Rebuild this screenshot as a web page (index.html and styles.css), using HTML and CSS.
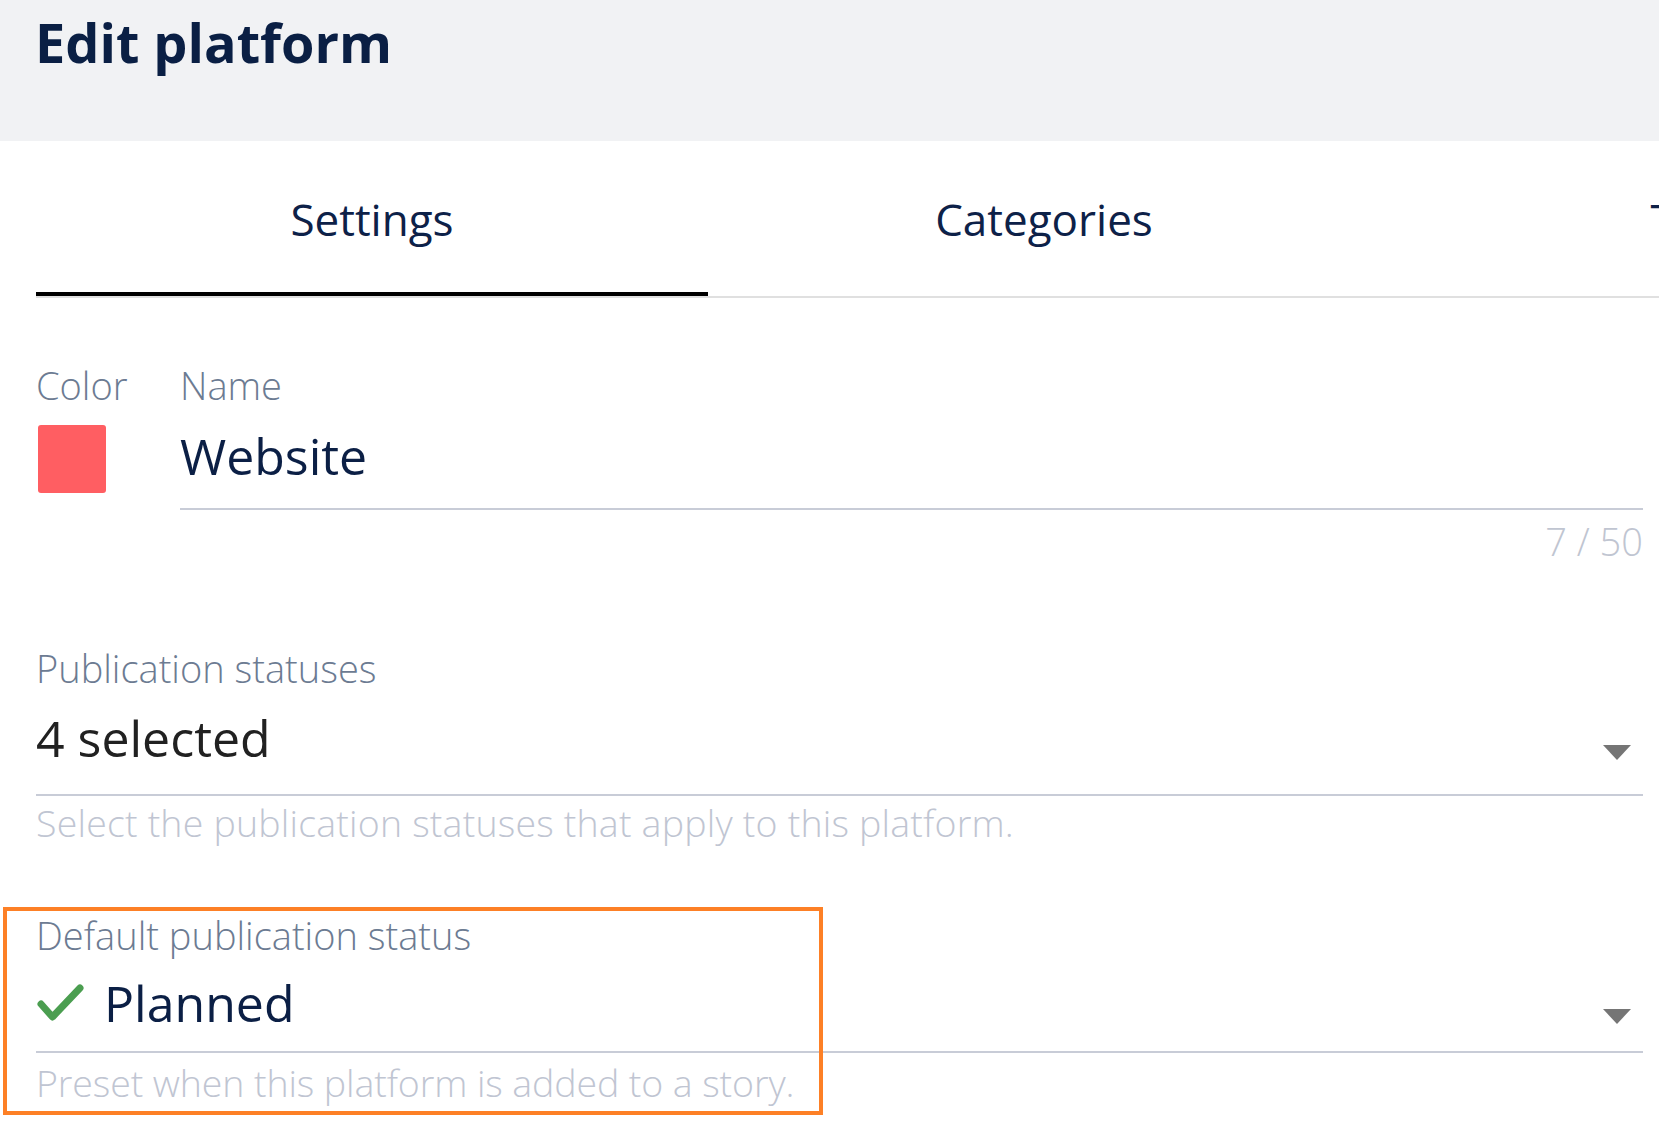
FILE: index.html
```html
<!DOCTYPE html>
<html lang="en">
<head>
<meta charset="utf-8">
<title>Edit platform</title>
<link rel="stylesheet" href="styles.css">
</head>
<body>
<header class="page-header">
  <h1 class="page-title">Edit platform</h1>
</header>
<nav class="tabs">
  <div class="tab tab-active">Settings</div>
  <div class="tab">Categories</div>
  <div class="tab">Topics</div>
</nav>
<main class="form">
  <section class="identity">
    <div class="color-field">
      <div class="field-label">Color</div>
      <div class="swatch"></div>
    </div>
    <div class="name-field">
      <div class="field-label">Name</div>
      <div class="text-input">Website</div>
      <div class="counter">7 / 50</div>
    </div>
  </section>
  <section class="select-field statuses">
    <div class="field-label">Publication statuses</div>
    <div class="select-control">
      <span class="select-value value-dark">4 selected</span>
      <span class="select-arrow"></span>
    </div>
    <div class="field-hint">Select the publication statuses that apply to this platform.</div>
  </section>
  <section class="select-field default-status">
    <div class="highlight-box"></div>
    <div class="field-label">Default publication status</div>
    <div class="select-control">
      <svg class="status-icon" width="47" height="39" viewBox="0 0 47 39"><polyline points="4,20 15.5,33 43,4" fill="none" stroke="#4b9e50" stroke-width="7" stroke-linecap="round" stroke-linejoin="round"/></svg>
      <span class="select-value">Planned</span>
      <span class="select-arrow"></span>
    </div>
    <div class="field-hint">Preset when this platform is added to a story.</div>
  </section>
</main>
</body>
</html>
```
FILE: styles.css
```css
html, body {
  margin: 0;
  padding: 0;
}
body {
  background: #ffffff;
  font-family: "Open Sans", "Noto Sans", "Liberation Sans", sans-serif;
  font-stretch: 92%;
  color: #0b1f45;
  overflow: hidden;
  width: 1659px;
  height: 1128px;
}
.page-header {
  background: #f1f2f4;
  height: 141px;
  padding-left: 35px;
  box-sizing: border-box;
}
.page-title {
  margin: 0;
  font-size: 54px;
  line-height: 84px;
  font-weight: 700;
  color: #0a1f44;
}
.tabs {
  display: flex;
  margin-left: 36px;
  border-bottom: 2px solid #e0e0e0;
  overflow: hidden;
}
.tab {
  flex: 0 0 672px;
  text-align: center;
  font-size: 44px;
  line-height: 60px;
  padding: 48px 0 43px;
  border-bottom: 4px solid transparent;
  color: #0d2148;
  white-space: nowrap;
}
.tab-active {
  border-bottom-color: #000000;
}
.form {
  padding: 0 16px 0 36px;
}
.identity {
  display: flex;
  margin-top: 63px;
}
.color-field {
  flex: 0 0 144px;
}
.name-field {
  flex: 1;
}
.field-label {
  font-size: 38px;
  line-height: 48px;
  font-weight: 300;
  color: #6c7b92;
  white-space: nowrap;
}
.swatch {
  width: 68px;
  height: 68px;
  margin-top: 16px;
  margin-left: 2px;
  background: #ff5e62;
  border-radius: 3px;
}
.text-input {
  font-size: 50px;
  line-height: 64px;
  margin-top: 15px;
  padding-bottom: 20px;
  border-bottom: 2px solid #c8ccd7;
  color: #0b1f45;
}
.counter {
  text-align: right;
  font-size: 38px;
  line-height: 48px;
  font-weight: 300;
  margin-top: 7px;
  color: #c0c5d1;
}
.statuses {
  margin-top: 79px;
}
.select-control {
  display: flex;
  align-items: flex-start;
  border-bottom: 2px solid #c8ccd7;
}
.statuses .select-control {
  margin-top: 14px;
  padding-bottom: 24px;
}
.select-value {
  flex: 1;
  font-size: 50px;
  line-height: 64px;
  color: #0b1f45;
  white-space: nowrap;
}
.value-dark {
  color: #212121;
}
.select-arrow {
  width: 0;
  height: 0;
  border-left: 14.5px solid transparent;
  border-right: 14.5px solid transparent;
  border-top: 15px solid #757575;
  margin-top: 39px;
  margin-right: 12px;
}
.field-hint {
  font-size: 37.5px;
  line-height: 48px;
  font-weight: 300;
  color: #c0c5d2;
  white-space: nowrap;
}
.statuses .field-hint {
  margin-top: 3px;
  letter-spacing: 0.2px;
}
.default-status {
  position: relative;
  margin-top: 64px;
}
.default-status .select-control {
  margin-top: 12px;
  padding-bottom: 16px;
}
.default-status .select-arrow {
  margin-top: 38px;
}
.status-icon {
  flex: none;
  margin-top: 13px;
  margin-left: 1px;
  margin-right: 20px;
}
.default-status .field-hint {
  margin-top: 6px;
  letter-spacing: -0.1px;
}
.highlight-box {
  position: absolute;
  left: -33px;
  top: -4px;
  width: 820px;
  height: 208px;
  border: 4px solid #fd8026;
  box-sizing: border-box;
  pointer-events: none;
}
```
